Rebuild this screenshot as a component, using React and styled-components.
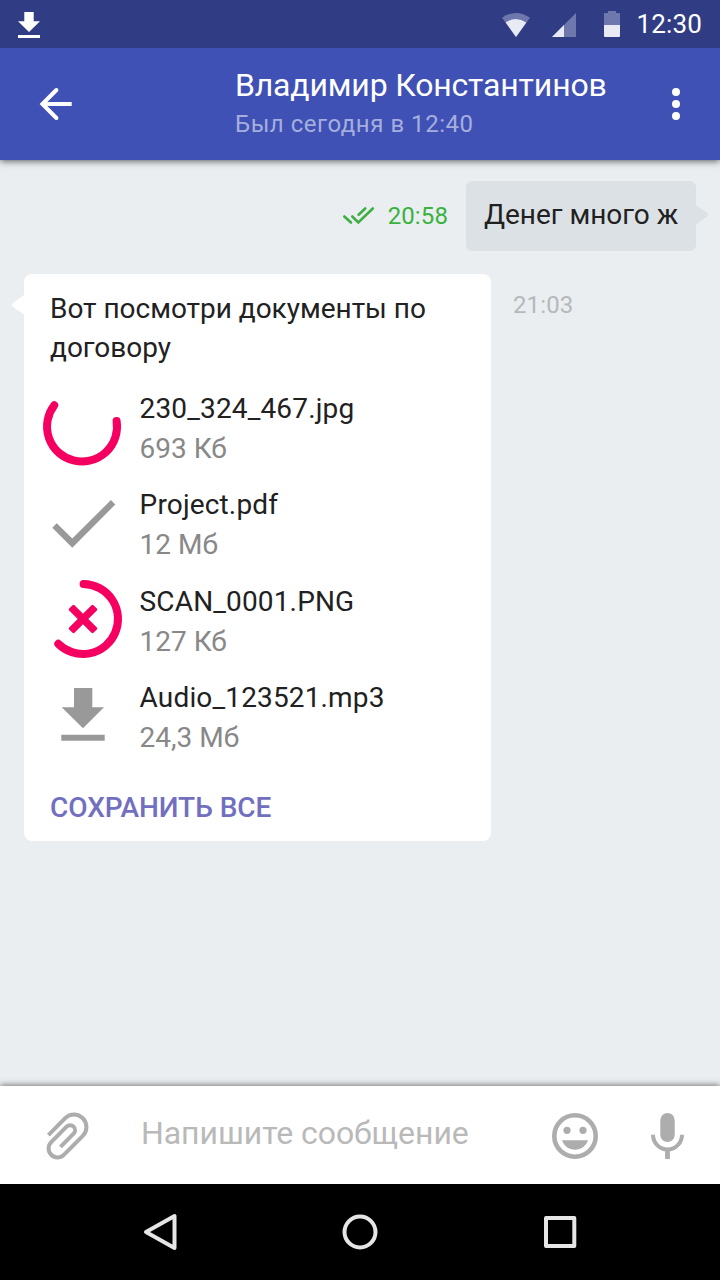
import React from "react";
import styled, { createGlobalStyle } from "styled-components";

const GlobalStyle = createGlobalStyle`
  * { box-sizing: border-box; }
  body { margin: 0; font-family: Roboto, sans-serif; background: #eaeef1; }
  svg { display: block; flex: none; overflow: visible; }
`;

const Screen = styled.div`
  width: 720px;
  height: 1280px;
  display: flex;
  flex-direction: column;
  overflow: hidden;
  background: #eaeef1;
`;

const StatusBar = styled.div`
  position: relative;
  z-index: 2;
  height: 48px;
  flex: none;
  display: flex;
  align-items: center;
  justify-content: space-between;
  padding: 0 18px;
  background: #303d84;
`;

const StatusGroup = styled.div`
  display: flex;
  align-items: center;
`;

const Clock = styled.span`
  margin-left: 17px;
  font-size: 26px;
  line-height: 48px;
  color: #fff;
  letter-spacing: 0.15px;
`;

const AppBar = styled.header`
  position: relative;
  z-index: 1;
  height: 112px;
  flex: none;
  display: flex;
  align-items: center;
  padding: 0 40px;
  background: #4051b5;
  box-shadow: 0 1px 7px rgba(0, 0, 0, 0.65);
`;

const Contact = styled.div`
  flex: 1;
  padding: 0 0 0 163px;
  white-space: nowrap;
`;

const ContactName = styled.div`
  font-size: 32px;
  line-height: 38px;
  letter-spacing: -0.17px;
  color: #fff;
`;

const LastSeen = styled.div`
  padding-top: 1px;
  font-size: 24px;
  line-height: 38px;
  margin-bottom: -1px;
  letter-spacing: 0.53px;
  color: #a5aedd;
`;

const Chat = styled.main`
  flex: 1;
  display: flex;
  flex-direction: column;
  gap: 23px;
  padding: 21px 24px 0;
`;

const MessageRow = styled.div`
  display: flex;
  align-items: flex-start;
  justify-content: ${(p) => (p.$outgoing ? "flex-end" : "flex-start")};
`;

const Meta = styled.div`
  display: flex;
  align-items: center;
  font-size: 24px;
  line-height: 30px;
  letter-spacing: 0.12px;
  color: ${(p) => (p.$read ? "#39b23e" : "#b6b8ba")};
  margin: ${(p) => (p.$read ? "20px 18px 0 0" : "16px 0 0 22px")};
  gap: 12px;
`;

const Bubble = styled.div`
  position: relative;
  width: ${(p) => p.$width}px;
  height: ${(p) => p.$height}px;
  padding: ${(p) => p.$padding};
  border-radius: ${(p) => p.$radius}px;
  background: ${(p) => p.$color};
`;

const Tail = styled.svg`
  position: absolute;
  top: ${(p) => p.$top}px;
  ${(p) => p.$side}: -12px;
  fill: ${(p) => p.$color};
`;

const MessageText = styled.p`
  margin: 0;
  font-size: 28px;
  line-height: 39px;
  color: #212121;
  letter-spacing: -0.02px;
  white-space: pre;
`;

const FileList = styled.ul`
  margin: 21px 0 0 -8px;
  padding: 0;
  list-style: none;
  display: grid;
  grid-auto-rows: 96.4px;
`;

const FileItem = styled.li`
  display: flex;
  gap: 17.6px;
`;

const FileInfo = styled.div`
  padding-top: 1px;
`;

const FileName = styled.div`
  font-size: 28px;
  line-height: 40px;
  letter-spacing: 0.15px;
  color: #212121;
`;

const FileSize = styled(FileName)`
  letter-spacing: 0;
  color: #888;
`;

const SaveAll = styled.button`
  display: block;
  margin: 14px 0 0;
  padding: 0;
  border: 0;
  background: none;
  font: 500 28px/40px Roboto, sans-serif;
  letter-spacing: -0.06px;
  color: #726fc0;
`;

const Composer = styled.div`
  position: relative;
  height: 98px;
  flex: none;
  display: flex;
  align-items: center;
  padding: 0 36px 0 47px;
  background: #fff;
  box-shadow: 0 -1px 6px rgba(0, 0, 0, 0.5);
`;

const Placeholder = styled.div`
  flex: 1;
  padding: 0 0 4px 53px;
  font-size: 32px;
  line-height: 40px;
  letter-spacing: -0.06px;
  color: #b9b9b9;
  white-space: nowrap;
`;

const MicSlot = styled.div`
  margin-left: 53px;
`;

const NavBar = styled.nav`
  position: relative;
  height: 96px;
  flex: none;
  display: flex;
  align-items: center;
  justify-content: center;
  gap: 164px;
  background: #000;
`;

const Spinner = () => (
  <svg width="80" height="80" fill="none" stroke="#f50060" strokeWidth="8" strokeLinecap="round">
    <path d="M12.2 17.3A35 35 0 1 0 74.6 33" />
  </svg>
);

const Done = () => (
  <svg width="80" height="80" fill="#999">
    <path d="M10.3 43.7L14.7 39.2L30.3 54.5L69 16L73.3 20.5L30.3 63.7Z" />
  </svg>
);

const Cancel = () => (
  <svg width="80" height="80" fill="none" stroke="#f50060" strokeWidth="8">
    <path d="M41.6 3A35 35 0 1 1 16.3 62.8" strokeLinecap="round" />
    <g fill="#f50060" stroke="none" transform="rotate(45 41 38)">
      <rect x="23.8" y="34.2" width="34.4" height="7.6" rx="1.4" />
      <rect x="37.2" y="20.8" width="7.6" height="34.4" rx="1.4" />
    </g>
  </svg>
);

const Download = () => (
  <svg width="80" height="80" fill="#999">
    <path d="M32 11H50.3V30.3H62L41 51.3L19.7 30.3H32ZM19.3 57.7H62.7V63.7H19.3Z" />
  </svg>
);

const files = [
  { name: "230_324_467.jpg", size: "693 Кб", Icon: Spinner },
  { name: "Project.pdf", size: "12 Мб", Icon: Done },
  { name: "SCAN_0001.PNG", size: "127 Кб", Icon: Cancel },
  { name: "Audio_123521.mp3", size: "24,3 Мб", Icon: Download },
];

export default function App() {
  return (
    <Screen>
      <GlobalStyle />
      <StatusBar>
        <svg width="22" height="26" viewBox="18 11 22 26" fill="#fff">
          <path d="M24.3 12H33.7V21.3H40L29 32L18 21.3H24.3ZM18 35H40V38H18Z" />
        </svg>
        <StatusGroup>
          <svg width="118" height="48" viewBox="502 0 118 48" fill="#6f78ad">
            <path d="M516 37L502 17.7Q516 8.3 530 17.7Z" />
            <path d="M516 37L505.7 22.5Q516 15.5 526.3 22.5Z" fill="#e8ebf4" />
            <path d="M552 37L576 13V37Z" />
            <path d="M552 37L564 25V37Z" fill="#e8ebf4" />
            <path d="M604 25V14Q604 13 605 13H608V11H616V13H619Q620 13 620 14V25Z" />
            <path d="M604 25H620V36Q620 37 619 37H605Q604 37 604 36Z" fill="#e8ebf4" />
          </svg>
          <Clock>12:30</Clock>
        </StatusGroup>
      </StatusBar>

      <AppBar>
        <svg width="32" height="32" viewBox="40 88 32 32" fill="none" stroke="#fff" strokeWidth="4">
          <path d="M56.4 90L42.4 104L56.4 118" strokeLinecap="round" />
          <path d="M43 104H71.7" />
        </svg>
        <Contact>
          <ContactName>Владимир Константинов</ContactName>
          <LastSeen>Был сегодня в 12:40</LastSeen>
        </Contact>
        <svg width="8" height="32" fill="#fff">
          <circle cx="4" cy="4" r="4" />
          <circle cx="4" cy="16" r="4" />
          <circle cx="4" cy="28" r="4" />
        </svg>
      </AppBar>

      <Chat>
        <MessageRow $outgoing>
          <Meta $read>
            <svg width="36" height="30" viewBox="340 201 36 30" fill="none" stroke="#3fae43" strokeWidth="2.6" strokeLinecap="round">
              <path d="M344.3 216.5L351 222.5M352.3 216.5L358.3 222.4L372.8 208.5M358.6 214.8L365.2 208.5" />
            </svg>
            20:58
          </Meta>
          <Bubble $width={230} $height={70} $radius={6} $padding="14px 18px" $color="#dce1e5">
            <MessageText>Денег много ж</MessageText>
            <Tail $side="right" $top={24} $color="#dce1e5" width="12" height="20">
              <path d="M0 0L10.8 7.6Q13.2 9.7 10.8 11.8L0 19.5Z" />
            </Tail>
          </Bubble>
        </MessageRow>

        <MessageRow>
          <Bubble $width={467} $height={567} $radius={8} $padding="15px 26px 0" $color="#fff">
            <Tail $side="left" $top={21} $color="#fff" width="12" height="20">
              <path d="M12 0L1.2 8Q-1.2 10 1.2 12L12 19.5Z" />
            </Tail>
            <MessageText>{"Вот посмотри документы по\nдоговору"}</MessageText>
            <FileList>
              {files.map(({ name, size, Icon }) => (
                <FileItem key={name}>
                  <Icon />
                  <FileInfo>
                    <FileName>{name}</FileName>
                    <FileSize>{size}</FileSize>
                  </FileInfo>
                </FileItem>
              ))}
            </FileList>
            <SaveAll>СОХРАНИТЬ ВСЕ</SaveAll>
          </Bubble>
          <Meta>21:03</Meta>
        </MessageRow>
      </Chat>

      <Composer>
        <svg width="41" height="46" viewBox="47 1112 41 46" fill="none" stroke="#adadad" strokeWidth="4">
          <path d="M48.4 1135.1L65.2 1118.2A12.4 12.4 0 0 1 82.8 1135.8L63.8 1154.8A8.9 8.9 0 0 1 51.2 1142.2L66.6 1126.7A4.9 4.9 0 0 1 73.6 1133.7L60.5 1146.8" />
        </svg>
        <Placeholder>Напишите сообщение</Placeholder>
        <svg width="46" height="46" viewBox="552 1112 46 46" fill="#adadad">
          <circle cx="575" cy="1136" r="20.7" fill="none" stroke="#adadad" strokeWidth="4.6" />
          <circle cx="567" cy="1130.3" r="3.6" />
          <circle cx="583" cy="1130.3" r="3.6" />
          <path d="M562 1140.3H588C586 1146 581 1149.8 575 1149.8S564 1146 562 1140.3Z" />
        </svg>
        <MicSlot>
          <svg width="33" height="46" viewBox="651 1112 33 46" fill="#adadad">
            <rect x="660.3" y="1113" width="14.4" height="29" rx="7.2" />
            <path d="M653 1134.7a14.5 14.8 0 0 0 29 0" fill="none" stroke="#adadad" strokeWidth="4" />
            <rect x="665.1" y="1150" width="4.8" height="9" />
          </svg>
        </MicSlot>
      </Composer>

      <NavBar>
        <svg width="36" height="36" fill="none" stroke="#e6e6e6" strokeWidth="4" strokeLinejoin="round">
          <path d="M4 18L32.5 2V34Z" />
        </svg>
        <svg width="36" height="36" fill="none" stroke="#e6e6e6" strokeWidth="4">
          <circle cx="18" cy="18" r="15.5" />
        </svg>
        <svg width="36" height="36" fill="none" stroke="#e6e6e6" strokeWidth="4" strokeLinejoin="round">
          <rect x="4" y="4" width="28.3" height="28" />
        </svg>
      </NavBar>
    </Screen>
  );
}
